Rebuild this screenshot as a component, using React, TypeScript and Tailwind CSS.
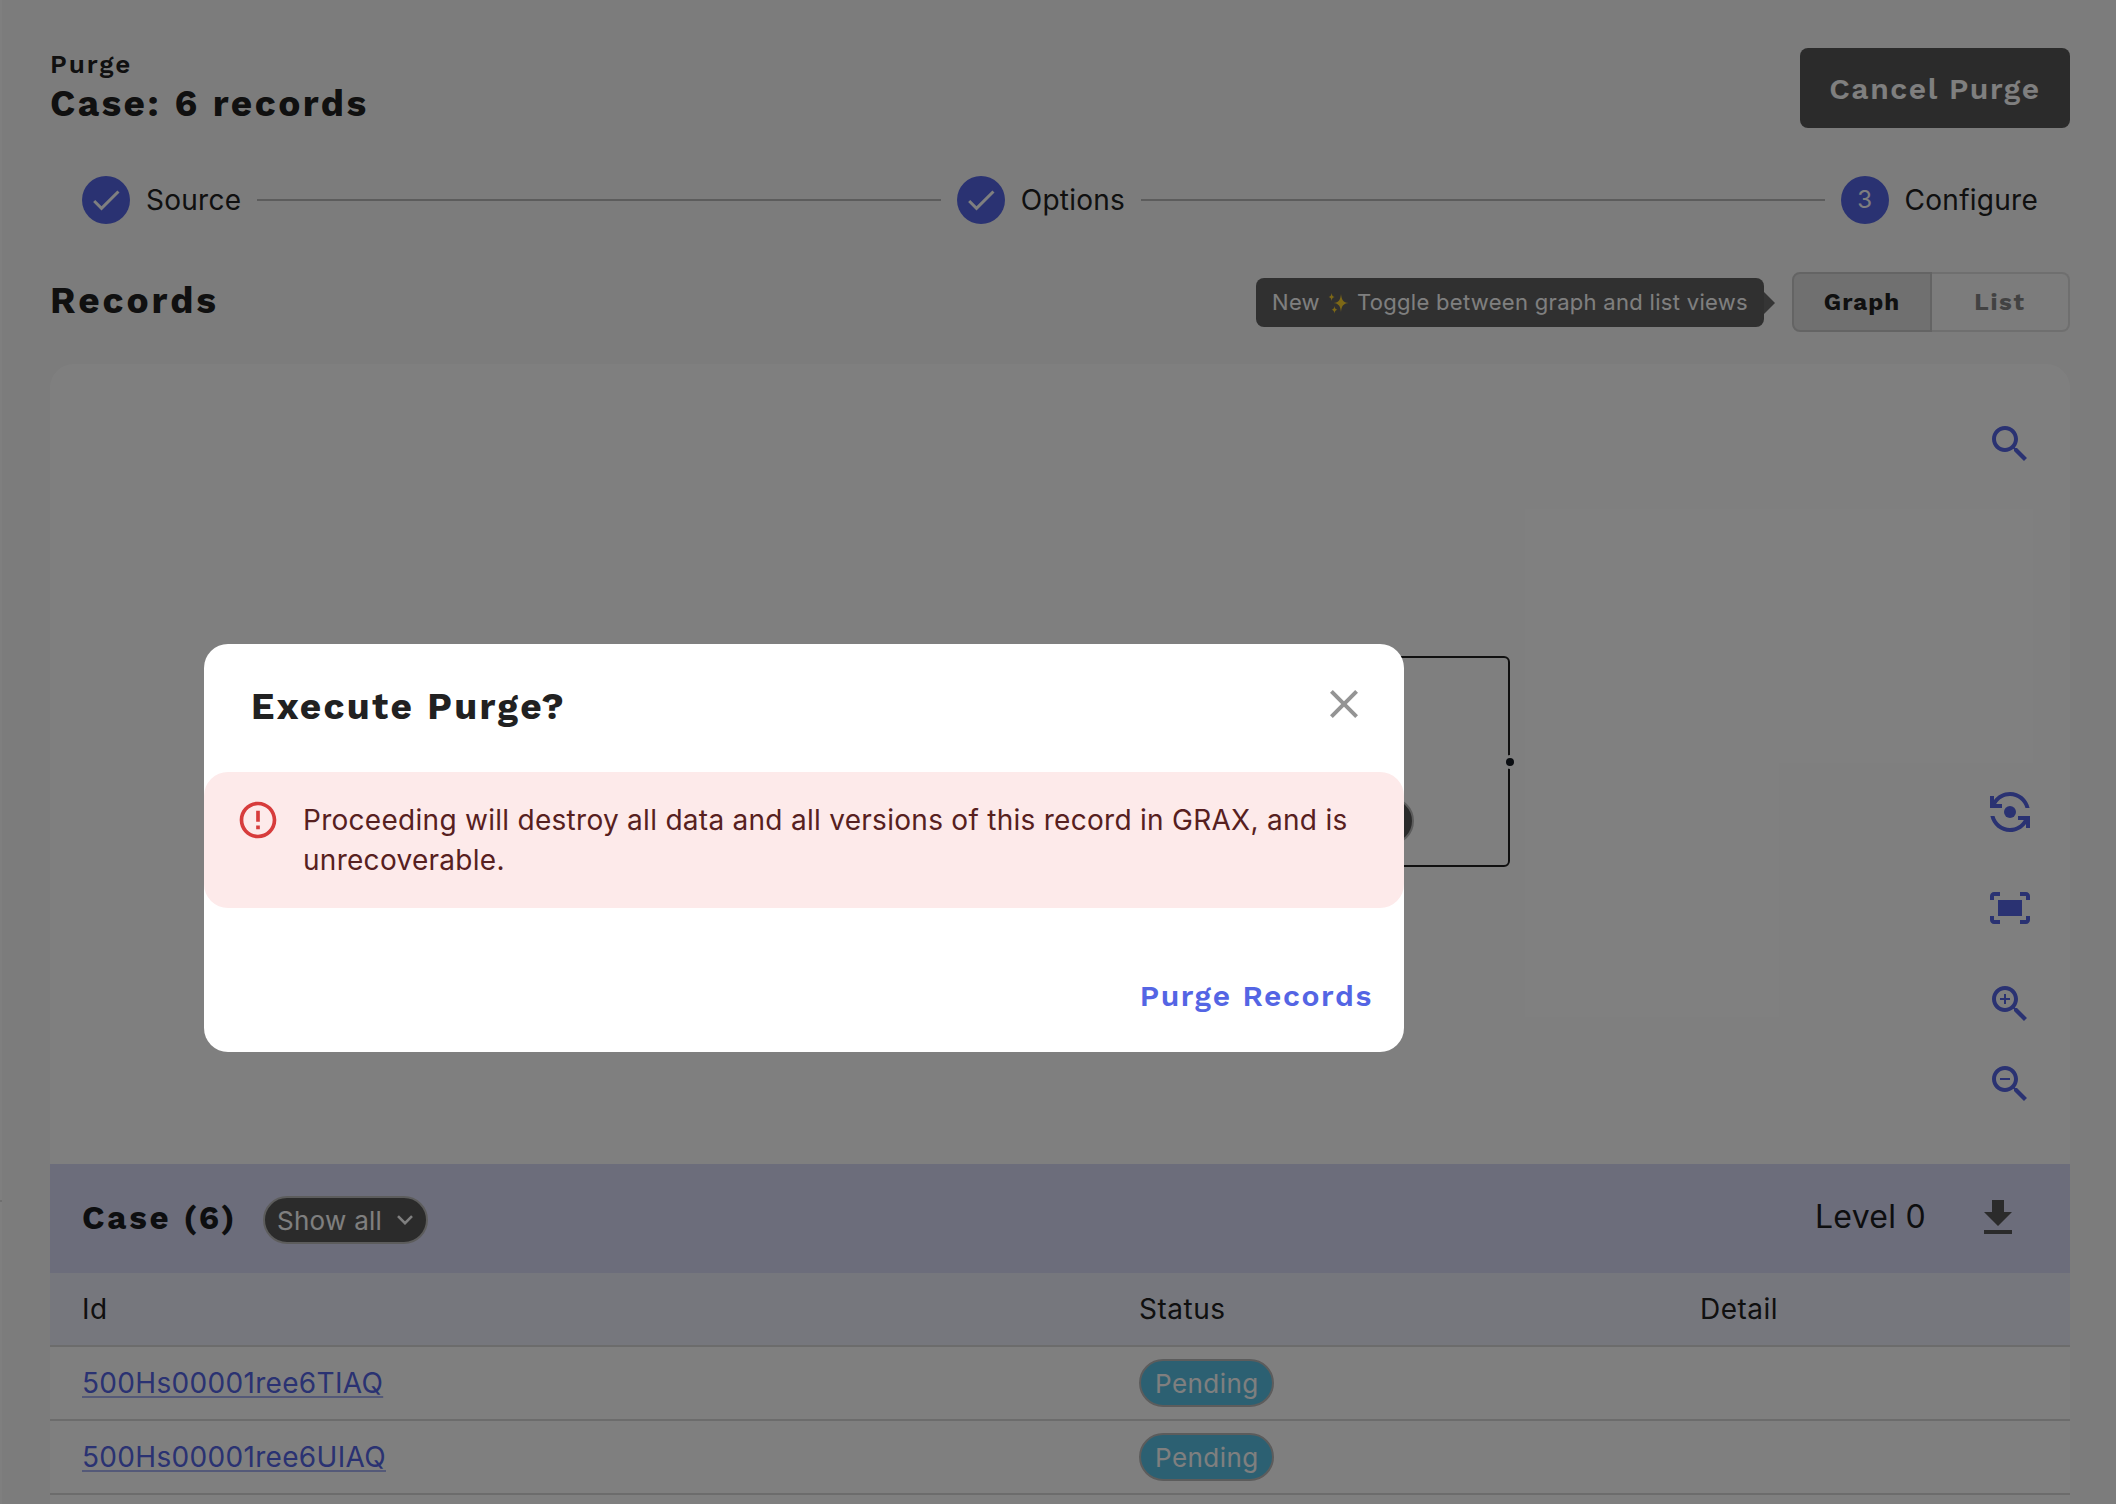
import type { ReactNode } from "react";

const HEAD = "font-['Work_Sans','Open_Sans',sans-serif]";

function Icon({ className, children }: { className: string; children: ReactNode }) {
  return (
    <svg viewBox="0 0 24 24" fill="currentColor" className={className} aria-hidden="true">
      {children}
    </svg>
  );
}

const LENS =
  "M15.5 14h-.79l-.28-.27C15.41 12.59 16 11.11 16 9.5 16 5.91 13.09 3 9.5 3S3 5.91 3 9.5 5.91 16 9.5 16c1.61 0 3.09-.59 4.23-1.57l.27.28v.79l5 4.99L20.49 19l-4.99-5zm-6 0C7.01 14 5 11.99 5 9.5S7.01 5 9.5 5 14 7.01 14 9.5 11.99 14 9.5 14z";

function Step({ label, marker }: { label: string; marker: ReactNode }) {
  return (
    <div className="flex items-center">
      <div className="flex size-12 items-center justify-center rounded-full bg-[#5465e4] text-white">{marker}</div>
      <div className="ml-4 text-[28px] leading-10 tracking-[0.263px]">{label}</div>
    </div>
  );
}

function Check() {
  return (
    <Icon className="size-9">
      <path d="M9 16.17 4.83 12l-1.42 1.41L9 19 21 7l-1.41-1.41z" />
    </Icon>
  );
}

function Connector() {
  return <div className="mx-4 h-0.5 flex-1 bg-[#b9b9b9]" />;
}

const RECORDS = ["500Hs00001ree6TIAQ", "500Hs00001ree6UIAQ"];

function RecordRow({ id }: { id: string }) {
  return (
    <div className="grid h-[74px] grid-cols-[1057px_561px_1fr] items-center border-b-2 border-[#d9d9d9] pl-8">
      <div className="text-[28px] leading-10 tracking-[0.32px]">
        <a className="text-[#5465e4] underline decoration-[#5465e4]/50 decoration-2 underline-offset-[3px] [text-decoration-skip-ink:none]">
          {id}
        </a>
      </div>
      <div className="flex h-12 w-[135px] items-center rounded-full border-2 border-[#b9b9b9] bg-[#58c1e4] pl-3.5 text-[26px] tracking-[0.45px] text-white">
        Pending
      </div>
    </div>
  );
}

function PurgeDialog() {
  return (
    <div className="absolute top-[644px] left-[204px] h-[408px] w-[1200px] rounded-3xl bg-white">
      <div className="flex h-32 items-start justify-between pt-[34px] pr-9 pl-[47px]">
        <h2 className={`${HEAD} text-[37px] leading-[57px] font-bold tracking-[2.31px] text-[#212121]`}>Execute Purge?</h2>
        <Icon className="mt-0.5 size-12 text-[#949494]">
          <path d="M19 6.41L17.59 5 12 10.59 6.41 5 5 6.41 10.59 12 5 17.59 6.41 19 12 13.41 17.59 19 19 17.59 13.41 12z" />
        </Icon>
      </div>
      <div className="flex h-[136px] items-start rounded-3xl bg-[#fdeaea] pt-7 pl-8">
        <Icon className="-mt-0.5 size-11 text-[#d73c3c]">
          <path d="M11 15h2v2h-2zm0-8h2v6h-2zm.99-5C6.47 2 2 6.48 2 12s4.47 10 9.99 10C17.52 22 22 17.52 22 12S17.52 2 11.99 2zM12 20c-4.42 0-8-3.58-8-8s3.58-8 8-8 8 3.58 8 8-3.58 8-8 8z" />
        </Icon>
        <p className="ml-[23px] w-[1070px] text-[28px] leading-10 tracking-[0.28px] text-[#572020]">
          Proceeding will destroy all data and all versions of this record in GRAX, and is unrecoverable.
        </p>
      </div>
      <div className="flex justify-end pt-16 pr-[31px]">
        <button className={`${HEAD} text-[30px] leading-[47px] font-semibold tracking-[1.59px] text-[#5465e4]`}>Purge Records</button>
      </div>
    </div>
  );
}

export default function App() {
  return (
    <div className="relative flex h-[1504px] w-[2116px] overflow-hidden bg-[#f8f8f8] font-['Inter',sans-serif] text-[#212121]">
      <aside className="w-0.5 bg-white pt-[1200px]">
        <div className="h-0.5 bg-[#e0e0e0]" />
      </aside>
      <main className="flex flex-1 flex-col pt-12 pr-[46px] pl-12">
        <header className="flex h-20 justify-between">
          <div className={HEAD}>
            <div className="text-[26px] leading-8 font-semibold tracking-[1.9px]">Purge</div>
            <h1 className="text-[37px] leading-[47px] font-bold tracking-[2.44px]">Case: 6 records</h1>
          </div>
          <button className={`${HEAD} h-20 w-[270px] rounded-lg bg-[#575757] text-[30px] font-semibold tracking-[1.56px] text-white`}>
            Cancel Purge
          </button>
        </header>

        <nav className="mt-12 flex items-center px-8">
          <Step label="Source" marker={<Check />} />
          <Connector />
          <Step label="Options" marker={<Check />} />
          <Connector />
          <Step label="Configure" marker={<span className="text-2xl">3</span>} />
        </nav>

        <div className="mt-12 flex h-[60px] items-center">
          <h2 className={`${HEAD} self-start text-[37px] leading-[57px] font-bold tracking-[2.93px]`}>Records</h2>
          <div className="relative mt-px mr-7 ml-auto flex h-[49px] w-[508px] items-center rounded-lg bg-[#616161] pl-4 text-[22px] tracking-[0.3px] text-white">
            <span className="w-14">New</span>
            <svg viewBox="0 0 22 22" className="h-[22px] w-[22px] text-[#fbd02d]" fill="currentColor" aria-hidden="true">
              <path d="M13 2c.6 5.600 2 8.500 7.500 9-5.500.6-6.900 3.400-7.500 9-.6-5.600-2-8.400-7.500-9 5.500-.5 6.900-3.400 7.500-9zM3.600 1c.3 2.500.9 3.600 3 4-2.100.4-2.700 1.500-3 4-.3-2.500-.9-3.600-3-4 2.100-.4 2.700-1.500 3-4zM6.500 14c.3 2.300.9 3.300 2.800 3.700-1.900.4-2.500 1.400-2.800 3.700-.3-2.300-.9-3.300-2.800-3.700 1.900-.4 2.500-1.400 2.800-3.700z" />
            </svg>
            <span className="ml-[7px] whitespace-nowrap">Toggle between graph and list views</span>
            <span className="absolute top-[14px] left-full border-y-[11px] border-l-[11px] border-y-transparent border-l-[#6b6b6b]" />
          </div>
          <div className={`${HEAD} flex h-[60px] w-[278px] text-2xl font-bold`}>
            <button className="w-[140px] rounded-l-lg border-2 border-[#c8c8c8] bg-[#e0e0e0] tracking-[1.01px]">Graph</button>
            <button className="flex-1 rounded-r-lg border-2 border-l-0 border-[#dedede] tracking-[1.7px] text-[#858585]">List</button>
          </div>
        </div>

        <section className="mt-8 flex-1 rounded-t-3xl bg-white">
          <div className="relative flex h-[800px] justify-end">
            <div className="absolute top-[292px] left-[560px] h-[211px] w-[900px] rounded-md border-2 border-[#212121]" />
            <div className="absolute top-[391px] left-[1453px] size-[14px] rounded-full border-[3px] border-white bg-[#151a22]" />
            <div className="absolute top-[433px] left-[1200px] h-12 w-[164px] rounded-full border-2 border-[#b9b9b9] bg-[#575757]" />
            <div className="flex flex-col pt-14 pr-9 text-[#5465e4]">
              <Icon className="size-12">
                <path d={LENS} />
              </Icon>
              <Icon className="mt-80 size-12">
                <path d="M8 10V8H5.090C6.470 5.610 9.050 4 12 4c3.720 0 6.850 2.560 7.740 6h2.060c-.93-4.560-4.960-8-9.800-8-3.270 0-6.180 1.580-8 4.010V4H2v6h6zM16 14v2h2.910c-1.380 2.390-3.960 4-6.910 4-3.720 0-6.850-2.560-7.740-6H2.200c.93 4.560 4.960 8 9.800 8 3.270 0 6.180-1.580 8-4.010V20h2v-6h-6z" />
                <circle cx="12" cy="12" r="3" />
              </Icon>
              <Icon className="mt-12 size-12">
                <path d="M17 4h3c1.100 0 2 .9 2 2v2h-2V6h-3V4zM4 8V6h3V4H4c-1.100 0-2 .9-2 2v2h2zm16 8v2h-3v2h3c1.100 0 2-.9 2-2v-2h-2zM7 18H4v-2H2v2c0 1.100.9 2 2 2h3v-2zM18 8H6v8h12V8z" />
              </Icon>
              <Icon className="mt-12 size-12">
                <path d={LENS} />
                <path d="M12 10h-2v2H9v-2H7V9h2V7h1v2h2v1z" />
              </Icon>
              <Icon className="mt-8 size-12">
                <path d={LENS} />
                <path d="M7 9h5v1H7z" />
              </Icon>
            </div>
          </div>

          <div className="flex h-[109px] items-start bg-[#d9daf6] pt-[30px] pr-12 pl-8">
            <h3 className={`${HEAD} w-[181px] text-[33px] leading-[47px] font-bold tracking-[2.79px] text-[#1b1c20]`}>Case (6)</h3>
            <button className="mt-0.5 flex h-12 w-[165px] items-center rounded-full border-2 border-[#b9b9b9] bg-[#575757] pl-3 text-[26px] tracking-[0.28px] text-white">
              Show all
              <svg viewBox="0 0 16 10" className="ml-[15px] h-2.5 w-4" fill="none" stroke="currentColor" strokeWidth="2.600" aria-hidden="true">
                <path d="M1 1.200 8 8.200l7-7" />
              </svg>
            </button>
            <div className="mr-12 ml-auto text-[32px] leading-[45px] tracking-[0.28px] text-[#1b1c20]">Level 0</div>
            <Icon className="size-12 text-[#575757]">
              <path d="M19 9h-4V3H9v6H5l7 7 7-7zM5 18v2h14v-2H5z" />
            </Icon>
          </div>
          <div className="grid h-[74px] grid-cols-[1057px_561px_1fr] items-center border-b-2 border-[#d9d9d9] bg-[#edeefb] pl-8 text-[28px] leading-10 tracking-[0.5px]">
            <div>Id</div>
            <div>Status</div>
            <div>Detail</div>
          </div>
          {RECORDS.map((id) => (
            <RecordRow key={id} id={id} />
          ))}
        </section>
      </main>
      <div className="absolute inset-0 bg-black/50" />
      <PurgeDialog />
    </div>
  );
}
